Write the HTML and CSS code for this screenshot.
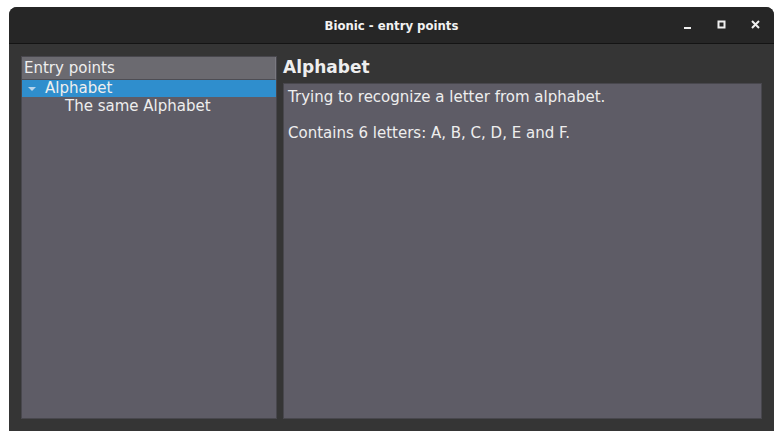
FILE: index.html
```html
<!DOCTYPE html>
<html>
<head>
<meta charset="utf-8">
<link rel="stylesheet" href="styles.css">
</head>
<body>
<div class="window">
  <div class="titlebar">
    <div class="title">Bionic - entry points</div>
    <div class="controls">
      <span class="ctl"><svg width="10" height="10" viewBox="0 0 10 10"><rect x="1" y="7" width="7" height="2" fill="#f0f0f0"/></svg></span>
      <span class="ctl"><svg width="10" height="10" viewBox="0 0 10 10"><rect x="1.5" y="1.5" width="6" height="6" fill="none" stroke="#f0f0f0" stroke-width="2"/></svg></span>
      <span class="ctl"><svg width="10" height="10" viewBox="0 0 10 10"><path d="M1 1L8 8M8 1L1 8" stroke="#f0f0f0" stroke-width="2"/></svg></span>
    </div>
  </div>
  <div class="content">
    <div class="tree">
      <div class="tree-header">Entry points</div>
      <div class="row selected"><span class="arrow"></span><span>Alphabet</span></div>
      <div class="row child">The same Alphabet</div>
    </div>
    <div class="detail">
      <div class="heading">Alphabet</div>
      <div class="desc">
        <p>Trying to recognize a letter from alphabet.</p>
        <p>Contains 6 letters: A, B, C, D, E and F.</p>
      </div>
    </div>
  </div>
</div>
</body>
</html>
```
FILE: styles.css
```css
html, body {
  margin: 0;
  padding: 0;
  background: #ffffff;
}
body {
  padding: 7px 9px 9px 9px;
  font-family: "DejaVu Sans", sans-serif;
  color: #eeeeee;
}
.window {
  width: 765px;
  height: 424px;
  background: #353535;
  border-radius: 8px 8px 0 0;
  display: flex;
  flex-direction: column;
  overflow: hidden;
}
.titlebar {
  height: 36px;
  background: #262626;
  border-bottom: 1px solid #141414;
  position: relative;
  display: flex;
  align-items: center;
  justify-content: center;
  flex: none;
}
.title {
  font-family: "DejaVu Sans Condensed", "DejaVu Sans", sans-serif;
  font-weight: bold;
  font-size: 13px;
  color: #f2f2f2;
}
.controls {
  position: absolute;
  right: 13px;
  top: 0;
  height: 36px;
  display: flex;
  align-items: center;
  gap: 24px;
}
.ctl {
  width: 10px;
  height: 10px;
  display: flex;
}
.content {
  flex: 1;
  display: flex;
  gap: 6px;
  padding: 12px;
}
.tree {
  width: 254px;
  background: #5e5c66;
  border: 1px solid #48474d;
  font-size: 15px;
  display: flex;
  flex-direction: column;
}
.tree-header {
  height: 22px;
  line-height: 23px;
  padding-left: 2px;
  background: #6b6a70;
  border-bottom: 1px solid #4e4d53;
  border-right: 1px solid #7a7980;
}
.row {
  height: 17px;
  line-height: 17px;
  display: flex;
  align-items: center;
}
.selected {
  background: #2f8ecd;
}
.arrow {
  width: 0;
  height: 0;
  border-left: 4px solid transparent;
  border-right: 4px solid transparent;
  border-top: 4px solid #b9d4ea;
  margin: 0 9px 0 6px;
}
.child {
  padding-left: 43px;
  padding-top: 1px;
}
.detail {
  flex: 1;
  display: flex;
  flex-direction: column;
}
.heading {
  font-weight: bold;
  font-size: 17px;
  height: 27px;
  line-height: 20px;
  padding-top: 1px;
  box-sizing: border-box;
}
.desc {
  flex: 1;
  background: #5e5c66;
  border: 1px solid #48474d;
  padding: 4px 4px;
  font-size: 15px;
}
.desc p {
  margin: 0 0 18px 0;
  line-height: 18px;
}
```
